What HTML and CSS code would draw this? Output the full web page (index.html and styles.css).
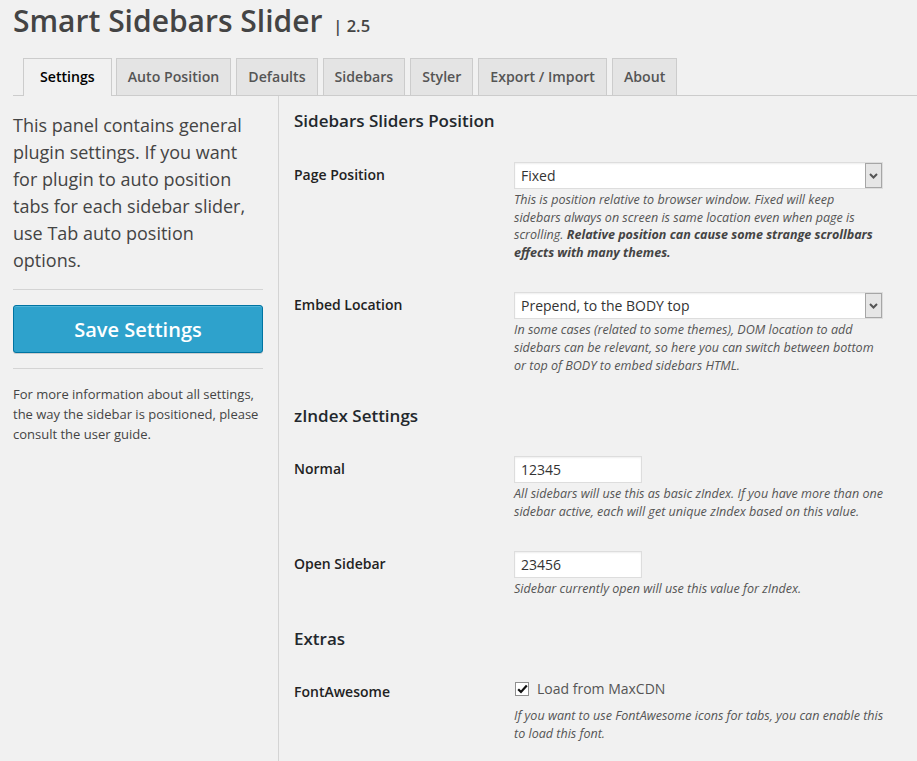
FILE: index.html
```html
<!DOCTYPE html>
<html>
<head>
<meta charset="utf-8">
<title>Smart Sidebars Slider</title>
<link rel="stylesheet" href="styles.css">
</head>
<body>
<div class="wrap">
  <h1 class="title">Smart Sidebars Slider <span class="ver">| 2.5</span></h1>
  <nav class="tabs">
    <a class="tab active">Settings</a>
    <a class="tab">Auto Position</a>
    <a class="tab">Defaults</a>
    <a class="tab">Sidebars</a>
    <a class="tab">Styler</a>
    <a class="tab">Export / Import</a>
    <a class="tab">About</a>
  </nav>
  <div class="main">
    <aside class="side">
      <p class="intro">This panel contains general plugin settings. If you want for plugin to auto position tabs for each sidebar slider, use Tab auto position options.</p>
      <hr class="rule">
      <button class="save" type="button">Save Settings</button>
      <hr class="rule">
      <p class="help">For more information about all settings, the way the sidebar is positioned, please consult the user guide.</p>
    </aside>
    <section class="content">
      <h3 class="section-title first">Sidebars Sliders Position</h3>
      <table class="form-table">
        <tr>
          <th>Page Position</th>
          <td>
            <div class="select"><span class="select-value">Fixed</span><span class="select-arrow"><svg width="9" height="6" viewBox="0 0 9 6"><path d="M1 1 L4.5 4.5 L8 1" fill="none" stroke="#555" stroke-width="2"/></svg></span></div>
            <p class="description">This is position relative to browser window. Fixed will keep<br>sidebars always on screen is same location even when page is scrolling. <strong>Relative position can cause some strange scrollbars effects with many themes.</strong></p>
          </td>
        </tr>
        <tr>
          <th>Embed Location</th>
          <td>
            <div class="select"><span class="select-value">Prepend, to the BODY top</span><span class="select-arrow"><svg width="9" height="6" viewBox="0 0 9 6"><path d="M1 1 L4.5 4.5 L8 1" fill="none" stroke="#555" stroke-width="2"/></svg></span></div>
            <p class="description">In some cases (related to some themes), DOM location to add sidebars can be relevant, so here you can switch between bottom or top of BODY to embed sidebars HTML.</p>
          </td>
        </tr>
      </table>
      <h3 class="section-title">zIndex Settings</h3>
      <table class="form-table">
        <tr>
          <th>Normal</th>
          <td>
            <div class="text-input">12345</div>
            <p class="description">All sidebars will use this as basic zIndex. If you have more than one sidebar active, each will get unique zIndex based on this value.</p>
          </td>
        </tr>
        <tr>
          <th>Open Sidebar</th>
          <td>
            <div class="text-input">23456</div>
            <p class="description">Sidebar currently open will use this value for zIndex.</p>
          </td>
        </tr>
      </table>
      <h3 class="section-title last">Extras</h3>
      <table class="form-table">
        <tr>
          <th>FontAwesome</th>
          <td>
            <label class="check-row"><span class="checkbox"><svg width="11" height="10" viewBox="0 0 11 10"><path d="M1.2 5.2 L4 8 L9.8 1.5" fill="none" stroke="#111" stroke-width="2.2"/></svg></span>Load from MaxCDN</label>
            <p class="description check-desc">If you want to use FontAwesome icons for tabs, you can enable this to load this font.</p>
          </td>
        </tr>
      </table>
    </section>
  </div>
</div>
</body>
</html>
```
FILE: styles.css
```css
html, body {
  margin: 0;
  padding: 0;
  background: #f1f1f1;
}
body {
  font-family: "Open Sans", "Noto Sans", sans-serif;
  color: #444;
  font-size: 13px;
}
.wrap {
  padding: 1px 0 0 13px;
}
.title {
  margin: 0;
  height: 40px;
  font-size: 30px;
  line-height: 40px;
  font-weight: 600;
  color: #444;
}
.ver {
  font-size: 16.5px;
  line-height: 0;
  font-weight: 600;
  margin-left: 3px;
}
.tabs {
  display: flex;
  gap: 5px;
  margin-top: 17px;
  padding-left: 10px;
  border-bottom: 1px solid #ccc;
}
.tab {
  display: block;
  padding: 6px 11px;
  font-size: 14.15px;
  line-height: 24px;
  font-weight: 600;
  color: #555;
  background: #e4e4e4;
  border: 1px solid #ccc;
  border-bottom: none;
  text-decoration: none;
}
.tab.active {
  background: #f1f1f1;
  color: #000;
  padding: 6px 16px 7px 16px;
  margin-right: -1px;
  margin-bottom: -1px;
}
.main {
  display: flex;
}
.side {
  width: 250px;
  flex: none;
}
.intro {
  margin: 16px 0 0;
  font-size: 18px;
  line-height: 27px;
  color: #444;
}
.rule {
  border: 0;
  border-top: 1px solid #d4d4d4;
  height: 0;
  margin: 15px 0;
}
.save {
  display: block;
  width: 250px;
  height: 48px;
  margin: 0;
  padding: 0;
  font-family: inherit;
  font-size: 20px;
  font-weight: 600;
  color: #fff;
  background: #2ea2cc;
  border: 1px solid #0074a2;
  border-radius: 3px;
  box-shadow: inset 0 1px 0 rgba(120, 200, 230, 0.5), 0 1px 0 rgba(0, 0, 0, 0.15);
}
.help {
  margin: 0;
  font-size: 13px;
  line-height: 20px;
  color: #444;
}
.content {
  margin-left: 15px;
  padding-left: 15px;
  border-left: 1px solid #d4d4d4;
  flex: 1;
  min-height: 665px;
}
.section-title {
  margin: 15px 0 13px;
  font-size: 17px;
  line-height: 23px;
  font-weight: 600;
  color: #23282d;
}
.section-title.first {
  margin: 13px 0 14px;
}
.section-title.last {
  margin-top: 14px;
}
.form-table {
  border-spacing: 0;
  border-collapse: separate;
}
.form-table th {
  width: 200px;
  padding: 20px 10px 20px 0;
  text-align: left;
  vertical-align: top;
  font-size: 14px;
  line-height: 18px;
  font-weight: 600;
  color: #222;
}
.form-table td {
  width: 371px;
  padding: 16px 10px 15px 10px;
  vertical-align: top;
  font-size: 14px;
  line-height: 18px;
}
.select {
  position: relative;
  box-sizing: border-box;
  width: 369px;
  height: 27px;
  background: #fff;
  border: 1px solid #ddd;
  box-shadow: inset 0 1px 2px rgba(0, 0, 0, 0.07);
  display: flex;
  align-items: center;
  padding-left: 6px;
  font-size: 14px;
  color: #333;
}
.select-arrow {
  position: absolute;
  right: 0;
  top: 0;
  bottom: 0;
  width: 15px;
  background: #e6e6e6;
  border: 1px solid #a6a6a6;
  display: flex;
  align-items: center;
  justify-content: center;
}
.text-input {
  box-sizing: border-box;
  width: 128px;
  height: 27px;
  background: #fff;
  border: 1px solid #ddd;
  box-shadow: inset 0 1px 2px rgba(0, 0, 0, 0.07);
  padding-left: 6px;
  font-size: 14px;
  line-height: 25px;
  color: #333;
}
.description {
  margin: 2px 0 0;
  font-size: 12.55px;
  line-height: 17.6px;
  font-style: italic;
  color: #555;
}
.description strong {
  font-weight: 700;
  color: #444;
}
.check-row {
  display: flex;
  align-items: center;
  font-size: 14px;
  line-height: 20px;
  color: #555;
}
.checkbox {
  box-sizing: border-box;
  width: 14px;
  height: 14px;
  margin: 0 8px 0 1px;
  background: #fff;
  border: 1px solid #8f8f8f;
  display: flex;
  align-items: center;
  justify-content: center;
}
.check-desc {
  margin-top: 8px;
}
```
